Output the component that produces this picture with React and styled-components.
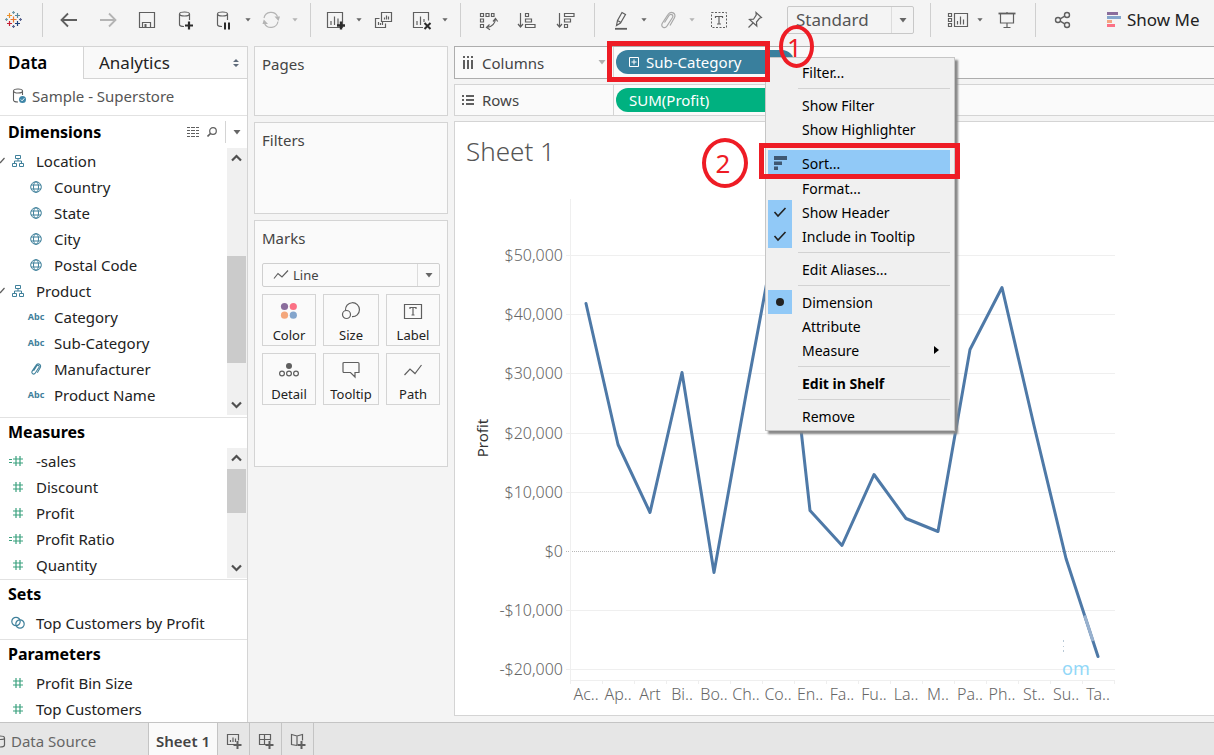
import { Fragment } from 'react'

import styled, { createGlobalStyle } from 'styled-components'


const SAMPLE_DIMENSIONS = [
  { name: 'Location', icon: 'tree', open: true },
  { name: 'Country', icon: 'globe', nested: true },
  { name: 'State', icon: 'globe', nested: true },
  { name: 'City', icon: 'globe', nested: true },
  { name: 'Postal Code', icon: 'globe', nested: true },
  { name: 'Product', icon: 'tree', open: true },
  { name: 'Category', icon: 'abc', nested: true },
  { name: 'Sub-Category', icon: 'abc', nested: true },
  { name: 'Manufacturer', icon: 'clip', nested: true },
  { name: 'Product Name', icon: 'abc', nested: true },
]

const SAMPLE_MEASURES = [
  { name: '-sales', icon: 'calc' },
  { name: 'Discount', icon: 'hash' },
  { name: 'Profit', icon: 'hash' },
  { name: 'Profit Ratio', icon: 'calc' },
  { name: 'Quantity', icon: 'hash' },
]

const SETS = [{ name: 'Top Customers by Profit', icon: 'set' }]

const PARAMETERS = [
  { name: 'Profit Bin Size', icon: 'hash' },
  { name: 'Top Customers', icon: 'hash' },
]

const MENU = [
  { label: 'Filter...' },
  { divider: true },
  { label: 'Show Filter' },
  { label: 'Show Highlighter' },
  { divider: true },
  { label: 'Sort...', mark: 'sort', active: true },
  { label: 'Format...' },
  { label: 'Show Header', mark: 'check' },
  { label: 'Include in Tooltip', mark: 'check' },
  { divider: true },
  { label: 'Edit Aliases...' },
  { divider: true },
  { label: 'Dimension', mark: 'dot' },
  { label: 'Attribute' },
  { label: 'Measure', submenu: true },
  { divider: true },
  { label: 'Edit in Shelf', bold: true },
  { divider: true },
  { label: 'Remove' },
]

const PROFIT = [
  ['Ac..', 41937], ['Ap..', 18138], ['Art', 6528], ['Bi..', 30222], ['Bo..', -3473],
  ['Ch..', 26590], ['Co..', 55618], ['En..', 6964], ['Fa..', 950], ['Fu..', 13059],
  ['La..', 5546], ['M..', 3385], ['Pa..', 34054], ['Ph..', 44516], ['St..', 21279],
  ['Su..', -1189], ['Ta..', -17725],
]

const TICKS = [50000, 40000, 30000, 20000, 10000, 0, -10000, -20000]


/* ---------- icons ---------- */

const Icon = ({ w = 24, h = 24, children, ...rest }) => (
  <svg width={w} height={h} viewBox={`0 0 ${w} ${h}`} fill='none' stroke='#5f5f5f' strokeWidth='1.2' aria-hidden='true' {...rest}>
    {children}
  </svg>
)

const LOGO_PLUSES = [
  [11.5, 11.5, 3, '#e8762d'], [7.5, 7.5, 2.5, '#eb9129'], [15.5, 7.5, 2.5, '#59879b'], [7.5, 15.5, 2.5, '#c72035'], [15.5, 15.5, 2.5, '#1f447e'],
  [11.5, 4.5, 1.5, '#7199a6'], [11.5, 18.5, 1.5, '#5b6591'], [4.5, 11.5, 1.5, '#7199a6'], [18.5, 11.5, 1.5, '#5b6591'],
]

const LogoIcon = () => (
  <Icon strokeWidth='1.2'>
    {LOGO_PLUSES.map(([x, y, r, color]) => (
      <path key={`${x}-${y}`} d={`M${x - r} ${y}h${r * 2}M${x} ${y - r}v${r * 2}`} stroke={color} />
    ))}
  </Icon>
)

const BackIcon = () => <Icon strokeWidth='1.8'><path d='M4.5 12H20M11 5.5L4.5 12l6.5 6.5' /></Icon>

const ForwardIcon = () => <Icon stroke='#b4b4b4' strokeWidth='1.8'><path d='M4 12h15.5M13 5.5L19.5 12 13 18.5' /></Icon>

const SaveIcon = () => (
  <Icon><path d='M4.5 4.5h15v15h-15zM7.5 19.5v-5h8v5' /><path d='M9.5 16h2v3h-2z' fill='#5f5f5f' stroke='none' /></Icon>
)

const Cylinder = () => (
  <>
    <ellipse cx='10.5' cy='6' rx='5' ry='2' />
    <path d='M5.5 6v10.5c0 1.2 2 2 4.5 2M15.5 6v6' />
  </>
)

const AddDataIcon = () => <Icon><Cylinder /><path d='M15 13.5v8M11 17.5h8' stroke='#2b2b2b' strokeWidth='2.2' /></Icon>

const PauseDataIcon = () => <Icon><Cylinder /><path d='M13 14.5v7M17 14.5v7' stroke='#2b2b2b' strokeWidth='2' /></Icon>

const RefreshIcon = () => (
  <Icon stroke='#b4b4b4'>
    <path d='M5 10a7.2 7.2 0 0 1 13.5-1.5M19 13.5a7.2 7.2 0 0 1-13.5 2' />
    <path d='M15.5 8.5h5.5l-1.5 4.5zM3.5 16h5.5l-4.2-4.5z' fill='#b4b4b4' stroke='none' />
  </Icon>
)

const ChartBox = () => <path d='M4.5 4.5h15v15h-15zM8 17v-4M11.5 17V8.5M15 17v-6.5' />

const NewSheetIcon = () => <Icon><ChartBox /><path d='M18 13.5v8M14 17.5h8' stroke='#2b2b2b' strokeWidth='2.4' /></Icon>

const DuplicateIcon = () => (
  <Icon><path d='M10.5 4.5h10v9h-10zM13.5 11.5v-2M15.5 11.5v-4M17.5 11.5v-3M8.5 10.5h-4v9h10v-4M7.5 17v-3M9.5 17v-2M11.5 17v-3' /></Icon>
)

const ClearIcon = () => (
  <Icon><path d='M14 19.5H4.5v-15h15v8M8 17v-4M11.5 17V8.5M15 14v-3' /><path d='M15.5 15l6 6M21.5 15l-6 6' stroke='#2b2b2b' strokeWidth='2' /></Icon>
)

const SwapIcon = () => (
  <Icon>
    <path d='M4.5 5.5h3v3h-3zM10 5.5h3v3h-3zM15.5 5.5h2.5v3h-2.5zM4.5 11h3v3h-3zM4.5 16.5h3v3h-3z' />
    <path d='M19.5 11c-.5 5-3 7.5-8.5 8.5M17 13.5l2.5-3 2.2 3M13.5 16.5l-3 3 3.5 2.2' />
  </Icon>
)

const SortAscIcon = () => (
  <Icon><path d='M5.5 5v14M3 16l2.5 3L8 16M10.5 5.5h3v3h-3zM10.5 11h6v3h-6zM10.5 16.5h9.5v3h-9.5z' /></Icon>
)

const SortDescIcon = () => (
  <Icon><path d='M5.5 5v14M3 16l2.5 3L8 16M10.5 5.5h9.5v3h-9.5zM10.5 11h6v3h-6zM10.5 16.5h3v3h-3z' /></Icon>
)

const HighlightIcon = () => (
  <Icon><path d='M7.5 17.5l1-5L13 4.5l3.5 2-5 8.5zM8.5 12.5l3.5 2' /><path d='M6 20.8h12' strokeWidth='1.8' /></Icon>
)

const ClipIcon = ({ size = 24, color = '#a8a8a8' }) => (
  <svg width={size} height={size} viewBox='0 0 24 24' fill='none' stroke={color} strokeWidth={size > 20 ? 1.2 : 1.6} aria-hidden='true'>
    <path d='M8.5 14.5L13 7.5c1.6-2.5 5 -.5 3.5 2l-5.5 8.5c-2.2 3.3-6.8.8-4.7-2.8L12 6.5c2.8-4.5 9-1 6.3 3.5L14 17.5' />
  </svg>
)

const TextIcon = () => (
  <Icon><rect x='4.5' y='4.5' width='15' height='15' strokeDasharray='2 1.5' strokeWidth='1' /><path d='M8.5 10V8.5h7V10M12 8.5v7.5M10 16h4' /></Icon>
)

const PinIcon = () => (
  <Icon><path d='M13 4.5l5.500 5-2 .8-3 3.700.3 4L6.500 11.500l4-.3 2.700-4.200zM10 15l-4.500 4.500' /></Icon>
)

const CardsIcon = () => (
  <Icon><path d='M2.5 5.5h3v3h-3zM2.5 10.5h3v3h-3zM2.5 15.5h3v3h-3zM8.5 5.5h13v13h-13zM11.5 16.5V13M14.5 16.5V8.5M17.5 16.5v-5' /></Icon>
)

const PresentIcon = () => <Icon><path d='M3.5 5.5h17' strokeWidth='1.8' /><path d='M5.5 6v9h13V6M12 4v2M12 15v4.5M8.5 19.5h7' /></Icon>

const ShareIcon = () => (
  <Icon strokeWidth='1.4'><circle cx='7' cy='12' r='2.5' /><circle cx='16' cy='7' r='2.5' /><circle cx='16' cy='17' r='2.5' /><path d='M9.2 10.8l4.5-2.6M9.2 13.2l4.5 2.6' /></Icon>
)

const ShowMeIcon = () => (
  <svg width='14' height='16' viewBox='0 0 14 16' aria-hidden='true'>
    <path d='M0 0h11v3H0z' fill='#8a6d9c' /><path d='M0 4h14v3H0z' fill='#84a5cc' />
    <path d='M0 8h5v3H0z' fill='#f4a582' /><path d='M0 12h8v3H0z' fill='#fb7185' />
  </svg>
)

const CaretDown = ({ small, color = '#666' }) => (
  <svg width={small ? 6 : 8} height={small ? 4 : 5} viewBox='0 0 8 5' aria-hidden='true'><path d='M.5 0h7L4 4.5z' fill={color} /></svg>
)

const FIELD_BLUE = '#3f809b'
const FIELD_GREEN = '#3aa17e'

const FieldIcon = ({ type }) => {

  if (type === 'abc') return <Abc>Abc</Abc>

  if (type === 'clip') return <ClipIcon size={16} color={FIELD_BLUE} />

  if (type === 'tree') return (
    <Icon w={12} h={12} stroke={FIELD_BLUE} strokeWidth='1'>
      <path d='M3.5.5h5v3h-5zM6 3.5V6M2.5 8.5V6h7v2.5M.5 8.5h4v3h-4zM7.5 8.5h4v3h-4z' />
    </Icon>
  )

  if (type === 'globe') return (
    <Icon w={12} h={12} stroke={FIELD_BLUE} strokeWidth='1'>
      <circle cx='6' cy='6' r='5.3' /><ellipse cx='6' cy='6' rx='2.5' ry='5.3' /><path d='M1 4h10M1 8h10' />
    </Icon>
  )

  if (type === 'set') return (
    <Icon w={14} h={14} stroke={FIELD_BLUE} strokeWidth='1.2'>
      <circle cx='5' cy='5.5' r='4.2' /><circle cx='9' cy='8' r='4.2' />
    </Icon>
  )

  return (
    <Icon w={20} h={12} stroke={FIELD_GREEN} strokeWidth='1.2'>
      <path d='M8 1v10M12 1v10M5 4h10M5 8h10' />
      {type === 'calc' && <path d='M1 4.5h3M1 7.5h3' />}
    </Icon>
  )

}

const MenuMark = ({ type }) => {

  if (type === 'sort') return (
    <Icon w={16} h={16} stroke='none' fill='#3f5872'><path d='M2 1h13v4H2zM2 6.5h8V10H2zM2 11.5h4V15H2z' /></Icon>
  )

  if (type === 'check') return <Icon w={16} h={16} stroke='#222' strokeWidth='1.6'><path d='M2.5 8L6 12l7.5-8' /></Icon>

  if (type === 'dot') return <Icon w={16} h={16} stroke='none' fill='#222'><circle cx='8' cy='8' r='4' /></Icon>

  return null

}

const MARK_ICONS = {
  Color: <Icon w={20} h={20} stroke='none'>
    <circle cx='5.5' cy='5.5' r='3.6' fill='#8a6d9c' /><circle cx='14.3' cy='5.5' r='3.6' fill='#fb7185' />
    <circle cx='5.5' cy='14.2' r='3.6' fill='#f4a77c' /><circle cx='14.3' cy='14.2' r='3.6' fill='#84a5cc' />
  </Icon>,
  Size: <Icon w={20} h={20}><path d='M4.5 9.5a7 7 0 1 1 6.5 6.2' /><circle cx='5.5' cy='13.5' r='4' /></Icon>,
  Label: <Icon w={20} h={20}><path d='M1.5 3.5h17v14h-17zM7 8V6.5h6V8M10 6.5V14M8.5 14h3' /></Icon>,
  Detail: <Icon w={20} h={20}>
    <circle cx='10' cy='6' r='3' fill='#5f5f5f' stroke='none' /><circle cx='3' cy='13.5' r='2.4' /><circle cx='10' cy='13.5' r='2.4' /><circle cx='17' cy='13.5' r='2.4' />
  </Icon>,
  Tooltip: <Icon w={20} h={20}><path d='M3 2.5h14a1 1 0 0 1 1 1v9h-4v4.5L9.5 12.5H3a1 1 0 0 1-1-1v-8a1 1 0 0 1 1-1z' /></Icon>,
  Path: <Icon w={20} h={20}><path d='M1.5 15l5.5-6 5 4.5L18.5 5' /></Icon>,
}


/* ---------- parts ---------- */

const ToolButton = ({ label, before, children }) => <Tool aria-label={label} $before={before}>{children}</Tool>

const CaretButton = ({ label, before, color }) => (
  <CaretTool aria-label={label} $before={before}><CaretDown small color={color} /></CaretTool>
)

const Toolbar = () => (
  <ToolbarStyle>
    <ToolButton label='Start page' before={2}><LogoIcon /></ToolButton>
    <Separator $before={16} />
    <ToolButton label='Undo' before={14}><BackIcon /></ToolButton>
    <ToolButton label='Redo' before={15}><ForwardIcon /></ToolButton>
    <ToolButton label='Save' before={15}><SaveIcon /></ToolButton>
    <ToolButton label='New data source' before={15}><AddDataIcon /></ToolButton>
    <ToolButton label='Pause updates' before={14}><PauseDataIcon /></ToolButton>
    <CaretButton label='Pause options' before={6} />
    <ToolButton label='Run update' before={5}><RefreshIcon /></ToolButton>
    <CaretButton label='Update options' before={6} color='#b4b4b4' />
    <Separator $before={9} />
    <ToolButton label='New worksheet' before={12}><NewSheetIcon /></ToolButton>
    <CaretButton label='New options' before={6} />
    <ToolButton label='Duplicate' before={6}><DuplicateIcon /></ToolButton>
    <ToolButton label='Clear sheet' before={14}><ClearIcon /></ToolButton>
    <CaretButton label='Clear options' before={6} />
    <Separator $before={9} />
    <ToolButton label='Swap rows and columns' before={15}><SwapIcon /></ToolButton>
    <ToolButton label='Sort ascending' before={15}><SortAscIcon /></ToolButton>
    <ToolButton label='Sort descending' before={15}><SortDescIcon /></ToolButton>
    <Separator $before={16} />
    <ToolButton label='Highlight' before={14}><HighlightIcon /></ToolButton>
    <CaretButton label='Highlight options' before={5} />
    <ToolButton label='Group' before={6}><ClipIcon /></ToolButton>
    <CaretButton label='Group options' before={6} color='#b4b4b4' />
    <ToolButton label='Show mark labels' before={9}><TextIcon /></ToolButton>
    <ToolButton label='Fix axes' before={12}><PinIcon /></ToolButton>
    <FitBox>
      <select aria-label='Fit' defaultValue='Standard'><option>Standard</option></select>
      <span className='arrow'><CaretDown /></span>
    </FitBox>
    <Separator $before={16} />
    <ToolButton label='Show cards' before={15}><CardsIcon /></ToolButton>
    <CaretButton label='Card options' before={4} />
    <ToolButton label='Presentation mode' before={9}><PresentIcon /></ToolButton>
    <Separator $before={16} />
    <ToolButton label='Share' before={15}><ShareIcon /></ToolButton>
    <ShowMe><ShowMeIcon />Show Me</ShowMe>
  </ToolbarStyle>
)

const ScrollBar = ({ before, thumb }) => (
  <ScrollBarStyle aria-hidden='true'>
    <Icon w={20} h={20} strokeWidth='2.2' stroke='#505050'><path d='M5 12.5L9.5 8l4.5 4.5' /></Icon>
    <Track $before={before} $thumb={thumb}><div className='thumb' /></Track>
    <Icon w={20} h={20} strokeWidth='2.2' stroke='#505050'><path d='M5 7.5L9.5 12 14 7.5' /></Icon>
  </ScrollBarStyle>
)

const FieldList = ({ items }) => (
  <FieldListStyle>
    {items.map(({ name, icon, nested, open }) => (
      <Field key={name} $nested={nested}>
        {open && <Icon w={6} h={10} className='open' strokeWidth='1.2'><path d='M0 7l4.5-5' /></Icon>}
        <span className='icon'><FieldIcon type={icon} /></span>
        <span className='name'>{name}</span>
      </Field>
    ))}
  </FieldListStyle>
)

const Sidebar = () => (
  <SidebarStyle>
    <PaneTabs>
      <PaneTab $active>Data</PaneTab>
      <PaneTab>
        Analytics
        <svg width='6' height='8' viewBox='0 0 6 8' fill='#5f6b7a' aria-hidden='true'><path d='M0 3h6L3 0zM0 5h6L3 8z' /></svg>
      </PaneTab>
    </PaneTabs>
    <DataSource>
      <Icon w={16} h={18} strokeWidth='1.1'>
        <ellipse cx='6' cy='4' rx='4.5' ry='2' /><path d='M1.5 4v9c0 1.2 2 2 4.5 2M10.5 4v4' />
        <circle cx='10.5' cy='12.5' r='3.5' fill='#3f86a8' stroke='none' /><path d='M8.8 12.5l1.3 1.3 2.2-2.5' stroke='#fff' strokeWidth='1' />
      </Icon>
      Sample - Superstore
    </DataSource>
    <Section>
      <SectionHead $tools>
        <h2>Dimensions</h2>
        <Icon w={12} h={10} strokeWidth='1'><path d='M0 .5h3M4 .5h4M9 .5h3M0 3.5h3M4 3.5h4M9 3.5h3M0 6.5h3M4 6.5h4M9 6.5h3M0 9.5h3M4 9.5h4M9 9.5h3' /></Icon>
        <Icon w={10} h={10}><circle cx='6' cy='4' r='3.3' /><path d='M3.5 6.5l-3 3' strokeWidth='1.6' /></Icon>
        <button aria-label='Dimension options'><CaretDown /></button>
      </SectionHead>
      <ScrollArea $tall>
        <FieldList items={SAMPLE_DIMENSIONS} />
        <ScrollBar before={88} thumb={107} />
      </ScrollArea>
    </Section>
    <Section>
      <SectionHead><h2>Measures</h2></SectionHead>
      <ScrollArea>
        <FieldList items={SAMPLE_MEASURES} />
        <ScrollBar before={1} thumb={44} />
      </ScrollArea>
    </Section>
    <Section $padded>
      <SectionHead><h2>Sets</h2></SectionHead>
      <FieldList items={SETS} />
    </Section>
    <Section>
      <SectionHead><h2>Parameters</h2></SectionHead>
      <FieldList items={PARAMETERS} />
    </Section>
  </SidebarStyle>
)

const Cards = () => (
  <CardsStyle>
    <Card $height={70}><h3>Pages</h3></Card>
    <Card $height={92}><h3>Filters</h3></Card>
    <Card $height={247}>
      <h3>Marks</h3>
      <MarkType>
        <Icon w={16} h={12}><path d='M1 9.5l4-5L9 8l6-6.5' /></Icon>
        <select aria-label='Mark type' defaultValue='Line'><option>Line</option></select>
        <span className='arrow'><CaretDown /></span>
      </MarkType>
      <MarkGrid>
        {Object.entries(MARK_ICONS).map(([name, icon]) => (
          <MarkButton key={name}>{icon}{name}</MarkButton>
        ))}
      </MarkGrid>
    </Card>
  </CardsStyle>
)

const ContextMenu = () => (
  <ContextMenuStyle role='menu'>
    {MENU.map(({ label, divider, mark, active, submenu, bold }, i) => (
      <Fragment key={i}>
        {divider
          ? <MenuDivider role='separator' />
          : (
            <MenuItem role='menuitem' $active={active} $marked={!!mark} $bold={bold}>
              <span className='mark'><MenuMark type={mark} /></span>
              <span className='label'>{label}</span>
              {submenu && <svg width='5' height='8' viewBox='0 0 5 8' aria-hidden='true'><path d='M0 0l5 4-5 4z' /></svg>}
            </MenuItem>
          )}
      </Fragment>
    ))}
  </ContextMenuStyle>
)

const Shelves = () => (
  <>
    <Shelf $focused>
      <div className='title'>
        <Icon w={12} h={14} strokeWidth='2'><path d='M2 0v2M6 0v2M10 0v2M2 4v9M6 4v9M10 4v9' /></Icon>
        <span>Columns</span>
        <CaretDown color='#b0b0b0' />
      </div>
      <PillSlot>
        <Pill $color='#397f9d'>
          <Icon w={10} h={10} stroke='#fff' strokeWidth='1'><path d='M.5.5h9v9h-9zM5 2.5v5M2.5 5h5' /></Icon>
          Sub-Category
        </Pill>
        <ContextMenu />
        <Annotation $top={-6} $left={-7} $width={163} $height={41} />
        <Annotation $top={96} $left={145} $width={201} $height={36} />
        <Step $top={-22} $left={165} $width={35} $height={43}>1</Step>
        <Step $top={91} $left={88} $width={46} $height={50}>2</Step>
      </PillSlot>
    </Shelf>
    <Shelf>
      <div className='title'>
        <Icon w={12} h={12} strokeWidth='2'><path d='M0 2h2M4 2h8M0 6h2M4 6h8M0 10h2M4 10h8' /></Icon>
        <span>Rows</span>
      </div>
      <PillSlot><Pill $color='#00b180'>SUM(Profit)</Pill></PillSlot>
    </Shelf>
  </>
)

const COL = 32
const LEFT = 116
const RIGHT = LEFT + COL * PROFIT.length
const BOTTOM = 500

const toX = (i) => LEFT + COL * i + COL / 2 - 1

const toY = (value) => Math.round(371 - value * 0.00592)

const money = (value) => `${value < 0 ? '-' : ''}$${Math.abs(value).toLocaleString('en-US')}`

const Chart = () => (
  <ChartStyle role='img' aria-label='Profit by Sub-Category' width='680' height='530' viewBox='0 0 680 530'>
    {TICKS.map((value) => (
      <g key={value}>
        <line
          className={value === 0 ? 'zero' : 'grid'}
          x1={LEFT - 5} x2={RIGHT} y1={toY(value) + 0.5} y2={toY(value) + 0.5}
        />
        <text x={LEFT - 8} y={toY(value) + 6} textAnchor='end'>{money(value)}</text>
      </g>
    ))}
    <path className='grid' d={`M${LEFT - 0.5} 19V${BOTTOM + 4}M${LEFT} ${BOTTOM + 0.5}H${RIGHT}`} />
    {PROFIT.map(([label], i) => (
      <g key={label}>
        <path className='grid' d={`M${LEFT + COL * (i + 1) - 0.5} ${BOTTOM}v4`} />
        <text x={toX(i)} y={BOTTOM + 20} textAnchor='middle'>{label}</text>
      </g>
    ))}
    <text className='axis' transform='translate(33 258) rotate(-90)' textAnchor='middle'>Profit</text>
    <polyline className='line' points={PROFIT.map(([, value], i) => `${toX(i)},${toY(value) + 0.5}`).join(' ')} />
    <path className='faded' d='M629.6 435.5l8.4 25.5' />
    <path className='specks' d='M608.5 460v2M608.5 466v1M608.5 470v2' />
    <text className='ghost' x='607' y='495'>om</text>
  </ChartStyle>
)

const SheetTabs = () => (
  <SheetTabsStyle>
    <SheetTab $source>
      <Icon w={6} h={14}><path d='M0 2c3 0 4.5.5 4.5 2v7c0 1.2-2 2-4.5 2M0 5.5c3 0 4.5-.5 4.5-1.5' /></Icon>
      Data Source
    </SheetTab>
    <SheetTab $active>Sheet 1</SheetTab>
    <SheetTab $small aria-label='New worksheet'>
      <Icon w={16} h={16}><path d='M9 11.5H1.5v-10h11v6M4.5 9V7M7 9V4.5M9.5 9V5.5' /><path d='M11.5 8v8M7.5 12h8' strokeWidth='2' /></Icon>
    </SheetTab>
    <SheetTab $small aria-label='New dashboard'>
      <Icon w={16} h={16}><path d='M9 11.5H1.5v-10h11v6M6.5 1.5v10M1.5 6.5h11' /><path d='M11.5 8v8M7.5 12h8' strokeWidth='2' /></Icon>
    </SheetTab>
    <SheetTab $small aria-label='New story'>
      <Icon w={16} h={16}><path d='M7 12.5l-5.5-1v-10L7 3l5.5-1.5v6M7 3v9.5' /><path d='M11.5 8v8M7.5 12h8' strokeWidth='2' /></Icon>
    </SheetTab>
  </SheetTabsStyle>
)


const App = () => (
  <>
    <GlobalStyle />
    <Page>
      <Toolbar />
      <Workspace>
        <Sidebar />
        <Cards />
        <Main>
          <Shelves />
          <Sheet>
            <h1>Sheet 1</h1>
            <Chart />
          </Sheet>
        </Main>
      </Workspace>
      <SheetTabs />
    </Page>
  </>
)


/* ---------- styles ---------- */

const GlobalStyle = createGlobalStyle`
  *{
    box-sizing: border-box;
  }

  body{
    margin: 0;
    background-color: #f4f4f4;
    color: #222;
    font-family: 'Noto Sans', sans-serif;
    font-size: 15px;
    line-height: 20px;
  }

  h1, h2, h3, ul{
    margin: 0;
    padding: 0;
    font-weight: normal;
  }

  button, select{
    border: none;
    padding: 0;
    background: none;
    color: inherit;
    font: inherit;
  }

  select{
    appearance: none;
    outline: none;
  }

  svg{
    flex: none;
  }
`

const Page = styled.div`
  display: flex;
  flex-direction: column;
  min-height: 100vh;
  overflow: hidden;
`

const ToolbarStyle = styled.header`
  display: flex;
  align-items: center;
  height: 46px;
  padding-bottom: 6px;
  white-space: nowrap;
`

const Tool = styled.button`
  flex: none;
  display: flex;
  width: 24px;
  height: 24px;
  margin-left: ${({ $before }) => $before}px;
`

const CaretTool = styled(Tool)`
  width: 12px;
  align-items: center;
  justify-content: center;
`

const Separator = styled.div`
  flex: none;
  width: 1px;
  height: 34px;
  margin-left: ${({ $before }) => $before}px;
  background-color: #cfcfcf;
`

const FitBox = styled.div`
  flex: none;
  display: flex;
  width: 127px;
  height: 28px;
  margin-left: 20px;
  border: 1px solid #c8c8c8;
  border-radius: 2px;
  color: #555;
  font-size: 17px;

  select{
    flex: 1;
    min-width: 0;
    padding-left: 8px;
  }

  .arrow{
    display: flex;
    align-items: center;
    justify-content: center;
    width: 22px;
    border-left: 1px solid #dcdcdc;
  }
`

const ShowMe = styled.button`
  display: flex;
  align-items: center;
  gap: 6px;
  margin-left: 32px;
  font-size: 17px;
`

const Workspace = styled.div`
  flex: 1;
  display: flex;
  gap: 6px;
`

const SidebarStyle = styled.aside`
  flex: none;
  width: 248px;
  border-top: 1px solid #d4d4d4;
  border-right: 1px solid #d4d4d4;
  background-color: #fff;
`

const PaneTabs = styled.div`
  display: flex;
  height: 32px;
`

const PaneTab = styled.button`
  display: flex;
  align-items: center;
  justify-content: space-between;
  flex: ${({ $active }) => $active ? 'none' : '1'};
  width: ${({ $active }) => $active ? '83px' : 'auto'};
  padding: 0 8px 0 ${({ $active }) => $active ? '8px' : '15px'};
  border-left: ${({ $active }) => $active ? 'none' : '1px solid #d4d4d4'};
  border-bottom: ${({ $active }) => $active ? 'none' : '1px solid #d4d4d4'};
  background-color: ${({ $active }) => $active ? '#fff' : '#f9f9f9'};
  color: ${({ $active }) => $active ? '#000' : '#222'};
  font-size: 17px;
  font-weight: ${({ $active }) => $active ? 600 : 400};
`

const DataSource = styled.div`
  display: flex;
  align-items: center;
  gap: 4px;
  height: 37px;
  padding: 0 0 2px 12px;
  border-bottom: 1px solid #e2e2e2;
  color: #555;
`

const Section = styled.section`
  padding-bottom: ${({ $padded }) => $padded ? '3px' : '0'};
  border-bottom: 1px solid #e2e2e2;

  &:last-child{
    border-bottom: none;
  }
`

const SectionHead = styled.div`
  display: flex;
  align-items: center;
  gap: 8px;
  height: ${({ $tools }) => $tools ? '32px' : '30px'};
  padding: 0 0 ${({ $tools }) => $tools ? '0' : '2px'} 8px;

  h2{
    flex: 1;
    color: #000;
    font-size: 16px;
    font-weight: 700;
  }

  button{
    display: flex;
    align-items: center;
    justify-content: center;
    width: 22px;
    height: 22px;
    border-left: 1px solid #d4d4d4;
  }
`

const ScrollArea = styled.div`
  display: flex;
  height: ${({ $tall }) => $tall ? '269px' : '131px'};
  padding-bottom: ${({ $tall }) => $tall ? '2px' : '1px'};
`

const FieldListStyle = styled.ul`
  flex: 1;
  list-style: none;
`

const Field = styled.li`
  position: relative;
  display: flex;
  align-items: center;
  height: 26px;
  padding-left: ${({ $nested }) => $nested ? '26px' : '8px'};

  .icon{
    display: flex;
    justify-content: center;
    width: 20px;
    margin-right: 8px;
  }

  .open{
    position: absolute;
    left: 0;
  }
`

const Abc = styled.span`
  color: ${FIELD_BLUE};
  font-size: 9px;
  font-weight: 700;
`

const ScrollBarStyle = styled.div`
  display: flex;
  flex-direction: column;
  width: 20px;
  background-color: #f0f0f0;
`

const Track = styled.div`
  flex: 1;
  padding-top: ${({ $before }) => $before}px;

  .thumb{
    width: 19px;
    height: ${({ $thumb }) => $thumb}px;
    background-color: #cbcbcb;
  }
`

const CardsStyle = styled.div`
  flex: none;
  display: flex;
  flex-direction: column;
  gap: 6px;
  width: 194px;
`

const Card = styled.section`
  min-height: ${({ $height }) => $height}px;
  padding: 7px;
  border: 1px solid #d4d4d4;
  background-color: #fafafa;

  h3{
    color: #444;
    font-size: 15px;
  }
`

const MarkType = styled.div`
  display: flex;
  align-items: center;
  height: 24px;
  margin-top: 15px;
  padding-left: 10px;
  border: 1px solid #cfcfcf;
  border-radius: 2px;
  color: #444;
  font-size: 13px;

  select{
    flex: 1;
    min-width: 0;
    padding-left: 4px;
  }

  .arrow{
    display: flex;
    align-items: center;
    justify-content: center;
    width: 22px;
    height: 100%;
    border-left: 1px solid #dcdcdc;
  }
`

const MarkGrid = styled.div`
  display: grid;
  grid-template-columns: 54px 1fr 54px;
  gap: 7px;
  margin-top: 7px;
`

const MarkButton = styled.button`
  display: flex;
  flex-direction: column;
  align-items: center;
  gap: 4px;
  height: 52px;
  padding-top: 6px;
  border: 1px solid #d4d4d4;
  font-size: 13px;
`

const Main = styled.main`
  flex: 1;
  display: flex;
  flex-direction: column;
  gap: 5px;
  min-width: 0;
  padding-bottom: 6px;
`

const Shelf = styled.section`
  display: flex;
  height: ${({ $focused }) => $focused ? '33px' : '32px'};
  border: 1px solid ${({ $focused }) => $focused ? '#adadad' : '#d4d4d4'};
  border-right: none;
  background-color: #fafafa;

  .title{
    display: flex;
    align-items: center;
    gap: 8px;
    width: 159px;
    padding: 0 7px;
    border-right: 1px solid #d4d4d4;
    color: #444;
  }

  .title span{
    flex: 1;
  }
`

const PillSlot = styled.div`
  position: relative;
  padding: 3px 2px;
`

const Pill = styled.button`
  display: flex;
  align-items: center;
  gap: 7px;
  width: 178px;
  height: 24px;
  padding-left: 13px;
  border-radius: 12px;
  background-color: ${({ $color }) => $color};
  color: #fff;
`

const ContextMenuStyle = styled.div`
  position: absolute;
  z-index: 2;
  top: 10px;
  left: 151px;
  width: 190px;
  padding: 2px;
  border: 1px solid #c6c6c6;
  background-color: #f0f0f0;
  box-shadow: 3px 3px 2px #888;
`

const MenuItem = styled.button`
  display: flex;
  align-items: center;
  width: 182px;
  height: ${({ $active }) => $active ? '26px' : '24px'};
  padding-right: 11px;
  background-color: ${({ $active }) => $active ? '#91c9f7' : 'transparent'};
  color: #000;
  font-size: 14px;
  font-weight: ${({ $bold }) => $bold ? 700 : 400};
  text-align: left;

  .mark{
    display: flex;
    align-items: center;
    justify-content: center;
    width: 24px;
    height: 100%;
    background-color: ${({ $marked }) => $marked ? '#91c9f7' : 'transparent'};
  }

  .label{
    flex: 1;
    padding: 2px 0 0 10px;
    white-space: nowrap;
  }
`

const MenuDivider = styled.div`
  height: 1px;
  margin: 4px 2px 4px 30px;
  background-color: #d2d2d2;
`

const Annotation = styled.div`
  position: absolute;
  z-index: 3;
  top: ${({ $top }) => $top}px;
  left: ${({ $left }) => $left}px;
  width: ${({ $width }) => $width}px;
  height: ${({ $height }) => $height}px;
  border: 5px solid #ee1c25;
  pointer-events: none;
`

const Step = styled(Annotation)`
  display: flex;
  align-items: center;
  justify-content: center;
  padding-right: 4px;
  border-width: 4px;
  border-radius: 50%;
  color: #ee1c25;
  font-size: 26px;
`

const Sheet = styled.section`
  flex: 1;
  border: 1px solid #d4d4d4;
  border-right: none;
  background-color: #fff;

  h1{
    padding: 14px 11px;
    color: #555;
    font-size: 26px;
    font-weight: 300;
    line-height: 30px;
  }
`

const ChartStyle = styled.svg`
  display: block;

  text{
    fill: #666;
    font-size: 16px;
    font-weight: 300;
  }

  .axis{
    fill: #333;
    font-size: 15px;
    font-weight: 400;
  }

  .grid{
    fill: none;
    stroke: #efefef;
  }

  .zero{
    stroke: #b8b8b8;
    stroke-dasharray: 1 1;
  }

  .line{
    fill: none;
    stroke: #4e79a7;
    stroke-width: 3;
    stroke-linejoin: round;
    stroke-linecap: round;
  }

  .faded{
    stroke: #98b1ce;
    stroke-width: 3;
  }

  .specks{
    stroke: #b9c9d6;
  }

  .ghost{
    fill: #92d8f8;
    font-size: 18px;
    font-weight: 400;
  }
`

const SheetTabsStyle = styled.footer`
  display: flex;
  height: 33px;
  border-top: 1px solid #c4c4c4;
  background-color: #e6e6e6;
`

const SheetTab = styled.button`
  display: flex;
  align-items: center;
  justify-content: ${({ $source }) => $source ? 'flex-start' : 'center'};
  gap: 5px;
  width: ${({ $source, $small }) => $source ? '149px' : $small ? '32px' : '69px'};
  padding-top: 4px;
  border-right: 1px solid #c4c4c4;
  background-color: ${({ $active }) => $active ? '#fafafa' : 'transparent'};
  color: ${({ $active }) => $active ? '#444' : '#666'};
  font-weight: ${({ $active }) => $active ? 600 : 400};
`

export default App
